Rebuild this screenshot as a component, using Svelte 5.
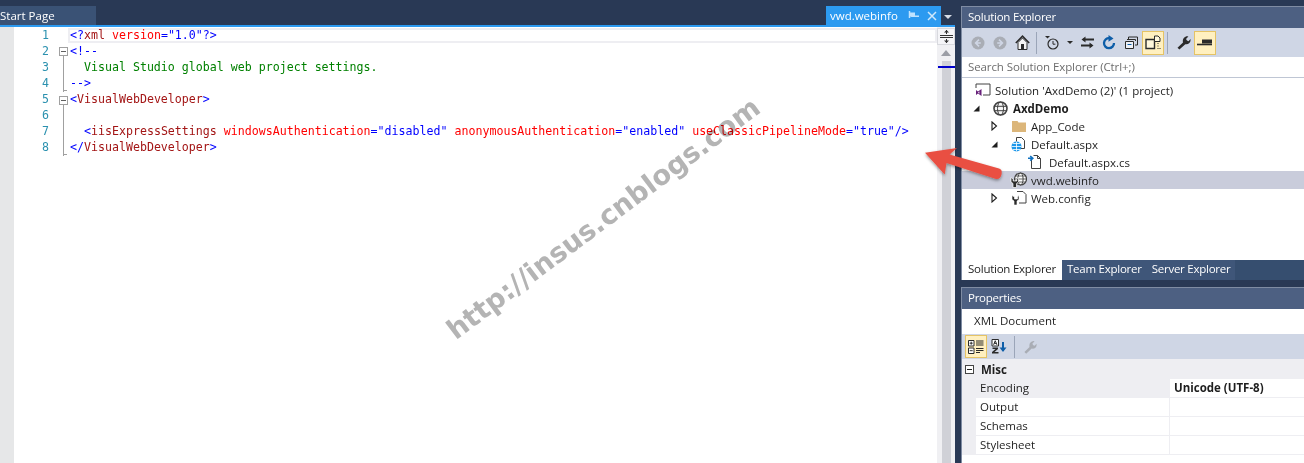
<script lang="ts">
	type Tok = { c: string; t: string };
	const D = 'd', E = 'e', A = 'a', G = 'g', K = 'k';
	const lines: Tok[][] = [
		[{ c: D, t: '<?' }, { c: E, t: 'xml' }, { c: K, t: ' ' }, { c: A, t: 'version' }, { c: D, t: '="1.0"?>' }],
		[{ c: D, t: '<!--' }],
		[{ c: G, t: '  Visual Studio global web project settings.' }],
		[{ c: D, t: '-->' }],
		[{ c: D, t: '<' }, { c: E, t: 'VisualWebDeveloper' }, { c: D, t: '>' }],
		[],
		[
			{ c: K, t: '  ' },
			{ c: D, t: '<' },
			{ c: E, t: 'iisExpressSettings' },
			{ c: K, t: ' ' },
			{ c: A, t: 'windowsAuthentication' },
			{ c: D, t: '="disabled"' },
			{ c: K, t: ' ' },
			{ c: A, t: 'anonymousAuthentication' },
			{ c: D, t: '="enabled"' },
			{ c: K, t: ' ' },
			{ c: A, t: 'useClassicPipelineMode' },
			{ c: D, t: '="true"/>' }
		],
		[{ c: D, t: '</' }, { c: E, t: 'VisualWebDeveloper' }, { c: D, t: '>' }]
	];

	const outline = ['', 'box', 'bar', 'end', 'box', 'bar', 'bar', 'end'];

	const tree = [
		{ label: "Solution 'AxdDemo (2)' (1 project)", depth: 0, exp: '', icon: 'sln' },
		{ label: 'AxdDemo', depth: 1, exp: 'open', icon: 'globe', bold: true },
		{ label: 'App_Code', depth: 2, exp: 'closed', icon: 'folder' },
		{ label: 'Default.aspx', depth: 2, exp: 'open', icon: 'aspx' },
		{ label: 'Default.aspx.cs', depth: 3, exp: 'none', icon: 'cs' },
		{ label: 'vwd.webinfo', depth: 2, exp: 'none', icon: 'vwd', selected: true },
		{ label: 'Web.config', depth: 2, exp: 'closed', icon: 'config' }
	];

	const props = [
		{ name: 'Encoding', value: 'Unicode (UTF-8)', active: true },
		{ name: 'Output', value: '' },
		{ name: 'Schemas', value: '' },
		{ name: 'Stylesheet', value: '' }
	];

	const indent = (d: number) => (d === 0 ? 12 : 18 * d - 10);
</script>

<div class="shell">
	<section class="doc">
		<div class="tabs">
			<div class="tab start">Start Page</div>
			<div class="tab-gap"></div>
			<div class="tab current">
				<span>vwd.webinfo</span>
				<svg width="11" height="9" viewBox="0 0 11 9" class="pin"><path d="M1.500 0v7" stroke="#bfe3ff" stroke-width="1.500" /><path d="M2 1.500h5v4H2zM7 4.500h4v1.500H2z" fill="#bfe3ff" /></svg>
				<svg width="10" height="10" viewBox="0 0 10 10" class="close"><path d="M1 1l8 8M9 1l-8 8" stroke="#cfe8fb" stroke-width="1.500" /></svg>
			</div>
			<div class="tab-menu"><i></i></div>
		</div>
		<div class="editor">
			<div class="gutter"></div>
			<div class="numbers">
				{#each lines as _, i}
					<div class="num">{i + 1}</div>
				{/each}
			</div>
			<div class="folds">
				{#each outline as o}
					<div class="fold {o}">
						{#if o === 'box'}<span class="minus"></span>{/if}
					</div>
				{/each}
			</div>
			<div class="code">
				{#each lines as line, i}
					<div class="line" class:hl={i === 0}>
						{#each line as tok}<span class={tok.c}>{tok.t}</span>{/each}
					</div>
				{/each}
			</div>
			<div class="vscroll">
				<div class="split">
					<svg width="15" height="15" viewBox="0 0 15 15"><path d="M1 6.500h13M1 8.500h13" stroke="#333" /><path d="M7.500 1v4M7.500 10v4" stroke="#333" /><path d="M5 3.500L7.500 1 10 3.500zM5 11.500L7.500 14 10 11.500z" fill="#333" /></svg>
				</div>
				<div class="up"></div>
				<div class="thumb"><i class="marker"></i></div>
			</div>
		</div>
	</section>

	<aside class="side">
		<section class="se">
			<header class="title">Solution Explorer</header>
			<div class="toolbar">
				<span class="tb"><svg width="14" height="14" viewBox="0 0 14 14"><circle cx="7" cy="7" r="6.500" fill="#a9adb5" /><path d="M8 3.600L4.600 7 8 10.400M4.800 7h5" fill="none" stroke="#cfd6e5" stroke-width="1.600" /></svg></span>
				<span class="tb"><svg width="14" height="14" viewBox="0 0 14 14"><circle cx="7" cy="7" r="6.500" fill="#a9adb5" /><path d="M6 3.600L9.400 7 6 10.400M9.200 7h-5" fill="none" stroke="#cfd6e5" stroke-width="1.600" /></svg></span>
				<span class="tb"><svg width="15" height="15" viewBox="0 0 15 15"><path d="M.8 8L7.500 1.200 14.200 8" fill="none" stroke="#2b2b2b" stroke-width="1.600" /><path d="M3 7.500v7h9v-7L7.500 3z" fill="#f4f4f4" stroke="#2b2b2b" /><path d="M6 9h3v5.500H6z" fill="#2b2b2b" /></svg></span>
				<i class="sep"></i>
				<span class="tb clock"><svg width="16" height="15" viewBox="0 0 16 15"><path d="M1 1h5L3.500 3.600z" fill="#2b2b2b" /><circle cx="9" cy="9" r="5" fill="none" stroke="#2b2b2b" stroke-width="1.200" /><path d="M9 6v3.200h2.400" fill="none" stroke="#2b2b2b" /></svg></span>
				<span class="drop"><svg width="6" height="3" viewBox="0 0 6 3"><path d="M0 0h6L3 3z" fill="#2b2b2b" /></svg></span>
				<span class="tb"><svg width="15" height="13" viewBox="0 0 15 13"><path d="M14 3.500H3M1 9.500h11" stroke="#2b2b2b" stroke-width="1.800" /><path d="M5.500 .5L1.500 3.500l4 3zM9.500 6.500l4 3-4 3z" fill="#2b2b2b" /></svg></span>
				<span class="tb"><svg width="14" height="15" viewBox="0 0 14 15"><path d="M7.500 3.200A5 5 0 1 0 12 8" fill="none" stroke="#0e5ea8" stroke-width="2.300" /><path d="M6.500 0l5 3.400-5 3.400z" fill="#0e5ea8" /></svg></span>
				<span class="tb"><svg width="13" height="13" viewBox="0 0 13 13"><path d="M3.500 3.500V1h9v8h-2.500" fill="none" stroke="#2b2b2b" /><path d="M2 3.500h8.500V5" fill="none" stroke="#2b2b2b" /><path d="M.5 5.500h8v7h-8z" fill="#eef1f7" stroke="#2b2b2b" /><path d="M2.500 8.500h4" stroke="#0e5ea8" /></svg></span>
				<span class="tb on"><svg width="17" height="15" viewBox="0 0 17 15"><path d="M1 4.500h8.500v9H1z" fill="#fff8dd" stroke="#2b2b2b" stroke-width="1.400" /><path d="M9.500 1h3.500l2 2v3.500H9.500z" fill="#fff8dd" stroke="#2b2b2b" /><path d="M13 8v1M13 10.500v1M13 13v1M15 13v1" stroke="#2b2b2b" /></svg></span>
				<i class="sep"></i>
				<span class="tb"><svg width="15" height="15" viewBox="0 0 15 15"><path d="M1.500 12.800L7 7.400C6.200 4.600 8 1.200 11.400 1.200l1 .2L10 4l1 1.600 1.500.6 2-2.200c.6 3.400-2 5.800-5.200 5.200L3.400 14.600z" fill="#2b2b2b" /></svg></span>
				<span class="tb on"><svg width="16" height="9" viewBox="0 0 16 9"><path d="M5 1.500h10v4H5z" fill="#2b2b2b" /><path d="M0 6.500h15" stroke="#2b2b2b" stroke-width="1.600" /></svg></span>
			</div>
			<div class="search">Search Solution Explorer (Ctrl+;)</div>
			<div class="tree">
				{#each tree as row}
					<div class="row" class:sel={row.selected} class:bold={row.bold} style="padding-left: {indent(row.depth)}px">
						{#if row.exp}
							<span class="exp">
								{#if row.exp === 'open'}<svg width="7" height="7" viewBox="0 0 7 7"><path d="M6.500 .5v6h-6z" fill="#1e1e1e" /></svg>{/if}
								{#if row.exp === 'closed'}<svg width="7" height="10" viewBox="0 0 7 10"><path d="M1 1l4.500 4L1 9z" fill="#fff" stroke="#1e1e1e" stroke-width="1.100" /></svg>{/if}
							</span>
						{/if}
						<span class="ico">
							{#if row.icon === 'sln'}
								<svg width="16" height="14" viewBox="0 0 16 14"><path d="M1 5V1h14v11H8" fill="none" stroke="#424242" /><path d="M1 7l2 1.500L6.500 6v7L3 10.500 1 12z" fill="#68217a" /><path d="M4.400 8.400v2.400L3 9.600z" fill="#fff" /></svg>
							{:else if row.icon === 'globe'}
								<svg width="15" height="15" viewBox="0 0 15 15"><circle cx="7.500" cy="7.500" r="6.500" fill="#f6f6f6" stroke="#424242" stroke-width="1.600" /><ellipse cx="7.500" cy="7.500" rx="3" ry="6.500" fill="none" stroke="#424242" /><path d="M1 5.300h13M1 9.700h13" stroke="#424242" /></svg>
							{:else if row.icon === 'folder'}
								<svg width="14" height="12" viewBox="0 0 14 12"><path d="M0 1h5.500l1 1.500H14V12H0z" fill="#dcb67a" /></svg>
							{:else if row.icon === 'aspx'}
								<svg width="15" height="15" viewBox="0 0 15 15"><path d="M5.500 .5h5l3 3v8h-8z" fill="#fff" stroke="#424242" /><circle cx="5.500" cy="9.500" r="5" fill="#1c97ea" /><path d="M.5 9.500h10M5.500 4.500v10M2 6.500h7M2 12.500h7" stroke="#fff" stroke-width=".8" /></svg>
							{:else if row.icon === 'cs'}
								<svg width="14" height="14" viewBox="0 0 14 14" class="nudge"><path d="M3.500 5v8.500h9V3.500l-3-3h-4" fill="#fff" stroke="#424242" /><path d="M9.500 .5v3h3" fill="none" stroke="#424242" /><path d="M0 3.300h3.500M2.200 1l2.600 2.300-2.600 2.300" fill="none" stroke="#0e70c0" stroke-width="1.600" /></svg>
							{:else if row.icon === 'vwd'}
								<svg width="17" height="16" viewBox="0 0 17 16"><circle cx="10.500" cy="7" r="6" fill="#fff" stroke="#424242" stroke-width="1.200" /><ellipse cx="10.500" cy="7" rx="2.600" ry="6" fill="none" stroke="#424242" /><path d="M4.500 7h12M5.500 4h10M5.500 10h10" stroke="#424242" stroke-width=".8" /><path d="M1 5.500v4.500l2 1.500v4h3.500v-4l2-1.500V5.500L6.800 7v2H3.200V7z" fill="#2b2b2b" stroke="#fff" stroke-width=".7" /></svg>
							{:else if row.icon === 'config'}
								<svg width="16" height="16" viewBox="0 0 16 16"><path d="M6 1.500h6l3 3V13H8" fill="#fff" stroke="#424242" /><path d="M1 5.500v4l2 1.500v4h3v-4l2-1.500v-4L6.500 7v2h-3V7z" fill="#2b2b2b" stroke="#fff" stroke-width=".6" /></svg>
							{/if}
						</span>
						<span class="label">{row.label}</span>
					</div>
				{/each}
			</div>
			<div class="se-tabs">
				<div class="se-tab active">Solution Explorer</div>
				<div class="se-tab">Team Explorer</div>
				<div class="se-tab">Server Explorer</div>
			</div>
		</section>

		<section class="props">
			<header class="title">Properties</header>
			<div class="kind">XML Document</div>
			<div class="toolbar ptool">
				<span class="tb on"><svg width="16" height="14" viewBox="0 0 16 14"><path d="M.5 .5h5.500v5.500H.5zM.5 8h5.500v5.500H.5z" fill="#fff" stroke="#2b2b2b" /><path d="M1.700 3.200h3M3.200 1.700v3M1.700 10.700h3" stroke="#2b2b2b" /><path d="M8 1h7.500M8 3h7.500M8 5h7.500M8 8.500h7.500M8 10.500h7.500M8 12.500h4" stroke="#2b2b2b" stroke-width="1.100" /></svg></span>
				<span class="tb"><svg width="16" height="15" viewBox="0 0 16 15"><path d="M1 .5h6.500v6.500H1z" fill="#fff" stroke="#2b2b2b" /><path d="M2.600 5.800L4.250 1.700 5.900 5.800M3.200 4.400h2.100" fill="none" stroke="#2b2b2b" /><path d="M1.500 8.500h5.500v1.500L3.500 13h4v1.500H1V13l3.500-3h-3z" fill="#2b2b2b" /><path d="M12 3v9" stroke="#0e5ea8" stroke-width="2" /><path d="M8.500 8.500h7L12 13z" fill="#0e5ea8" /></svg></span>
				<i class="sep"></i>
				<span class="tb"><svg width="14" height="14" viewBox="0 0 15 15"><path d="M1.500 12.800L7 7.400C6.200 4.600 8 1.200 11.400 1.200l1 .2L10 4l1 1.600 1.500.6 2-2.200c.6 3.400-2 5.800-5.200 5.200L3.400 14.600z" fill="#a9adb5" /></svg></span>
			</div>
			<div class="cat">
				<span class="catbox"></span>
				<b>Misc</b>
			</div>
			{#each props as p}
				<div class="prop">
					<div class="pname" class:active={p.active}>{p.name}</div>
					<div class="pvalue">{p.value}</div>
				</div>
			{/each}
		</section>
	</aside>

	<div class="watermark">http://insus.cnblogs.com</div>
	<svg class="arrow" width="90" height="50" viewBox="0 0 90 50">
		<defs>
			<filter id="arrow-shadow" x="-20%" y="-20%" width="140%" height="140%"><feDropShadow dx="0" dy="1.500" stdDeviation="1.500" flood-color="#000" flood-opacity=".4" /></filter>
		</defs>
		<path d="M5 12.700L37 8l-7.500 6.500L79 28.500c3 1 3 3 2.500 6-.5 3-2.500 5-5.500 4.500L26.500 23l-1.800 11.500z" fill="#e94f43" filter="url(#arrow-shadow)" />
	</svg>
</div>

<style>
	:global(body) {
		margin: 0;
		background: #293955;
	}

	.shell {
		position: relative;
		display: flex;
		height: 463px;
		width: 1304px;
		overflow: hidden;
		background: #293955;
		font-family: 'Open Sans', 'Noto Sans', sans-serif;
		font-size: 11.5px;
		color: #1e1e1e;
	}

	.doc {
		width: 955px;
		display: flex;
		flex-direction: column;
		flex: none;
	}

	.tabs {
		height: 25px;
		padding-top: 6px;
		box-sizing: border-box;
		display: flex;
	}

	.tab {
		color: #fff;
		line-height: 19px;
		white-space: nowrap;
	}

	.start {
		width: 96px;
		background: #3a5275;
	}

	.tab-gap {
		width: 730px;
	}

	.current {
		width: 115px;
		background: #2c9af0;
		padding-left: 4px;
		box-sizing: border-box;
		display: flex;
		align-items: center;
	}

	.pin {
		margin-left: 10px;
	}

	.close {
		margin-left: 8px;
	}

	.tab-menu {
		width: 14px;
		display: flex;
		justify-content: center;
		padding-top: 9px;
		box-sizing: border-box;
	}

	.tab-menu i {
		width: 0;
		height: 0;
		border: 4px solid transparent;
		border-top-color: #d8dde6;
		border-bottom: 0;
	}

	.editor {
		flex: 1;
		display: flex;
		background: #fff;
		border-top: 2px solid #2c9af0;
		font-family: 'DejaVu Sans Mono', monospace;
		font-size: 11.62px;
		line-height: 16.14px;
		min-height: 0;
	}

	.gutter {
		width: 14px;
		background: #e6e7e8;
		flex: none;
	}

	.numbers {
		width: 35px;
		flex: none;
		color: #2b91af;
		text-align: right;
		margin-top: -0.5px;
	}

	.num {
		height: 16.14px;
	}

	.folds {
		width: 19px;
		flex: none;
		padding-left: 10px;
		box-sizing: border-box;
	}

	.fold {
		height: 16.14px;
	}

	.minus {
		display: block;
		width: 9px;
		height: 9px;
		box-sizing: border-box;
		border: 1px solid #a0a0a0;
		background: linear-gradient(#606060, #606060) center / 5px 1px no-repeat #fff;
		position: relative;
		top: 4px;
	}

	.fold.bar::before,
	.fold.end::before {
		content: '';
		display: block;
		width: 1px;
		background: #a0a0a0;
		margin-left: 4px;
		height: 100%;
	}

	.fold.end::after {
		content: '';
		display: block;
		width: 4px;
		height: 1px;
		background: #a0a0a0;
		margin-left: 4px;
		margin-top: -2px;
	}

	.fold.box::after {
		content: '';
		display: block;
		width: 1px;
		height: 3px;
		background: #a0a0a0;
		margin-left: 4px;
		margin-top: 4px;
	}

	.code {
		flex: 1;
		min-width: 0;
		white-space: pre;
		margin-top: -0.5px;
	}

	.line {
		height: 16.14px;
		padding-left: 2px;
		box-sizing: border-box;
	}

	.line.hl {
		box-shadow: inset 0 0 0 2px #eeeef2;
		margin-top: 1px;
		height: 15.14px;
		line-height: 14.5px;
	}

	.d {
		color: #0000ff;
	}

	.e {
		color: #a31515;
	}

	.a {
		color: #ff0000;
	}

	.g {
		color: #008000;
	}

	.vscroll {
		width: 18px;
		flex: none;
		background: #f0f0f3;
		display: flex;
		flex-direction: column;
		align-items: center;
	}

	.split {
		width: 18px;
		height: 17px;
		margin-top: 1px;
		display: flex;
		align-items: center;
		justify-content: center;
		background: #f5f5f8;
		border: 1px solid #d8d9de;
		box-sizing: border-box;
	}

	.up {
		width: 0;
		height: 0;
		border: 5px solid transparent;
		border-bottom: 6px solid #9c9ea6;
		border-top: 0;
		margin-top: 5px;
	}

	.thumb {
		margin-top: 5px;
		flex: 1;
		width: 9px;
		background: #d0d1d7;
		position: relative;
	}

	.marker {
		position: absolute;
		left: -4px;
		width: 17px;
		height: 2px;
		top: 5px;
		background: #0000cc;
	}

	.side {
		width: 343px;
		margin-left: 6px;
		flex: none;
		padding-top: 6px;
		display: flex;
		flex-direction: column;
	}

	.se {
		height: 274px;
		display: flex;
		flex-direction: column;
		border-left: 1px solid #7f8ca3;
		box-sizing: border-box;
	}

	.title {
		height: 22px;
		line-height: 20px;
		padding-left: 6px;
		background: #4d6082;
		border-top: 1px solid #7f8ca3;
		box-sizing: border-box;
		color: #fff;
		flex: none;
		letter-spacing: -0.25px;
	}

	.toolbar {
		height: 29px;
		flex: none;
		background: #cfd6e5;
		display: flex;
		align-items: center;
		padding-left: 5px;
	}

	.tb {
		width: 22px;
		height: 24px;
		box-sizing: border-box;
		display: flex;
		align-items: center;
		justify-content: center;
		flex: none;
	}

	.tb.on {
		background: #fff0c0;
		border: 1px solid #e5c365;
	}

	.sep {
		width: 1px;
		height: 22px;
		margin: 0 4px 0 3px;
		background: #9ba5b8;
		flex: none;
	}

	.drop {
		width: 13px;
		flex: none;
		display: flex;
		align-items: center;
		padding-left: 4px;
		box-sizing: border-box;
	}

	.search {
		height: 21px;
		line-height: 20px;
		flex: none;
		background: #fff;
		color: #6d6d6d;
		padding-left: 6px;
		border-bottom: 1px solid #bfc6d4;
		box-sizing: border-box;
		letter-spacing: -0.1px;
	}

	.tree {
		flex: 1;
		background: #fff;
		padding-top: 3px;
	}

	.row {
		height: 18px;
		display: flex;
		align-items: center;
		box-sizing: border-box;
		white-space: nowrap;
	}

	.row.sel {
		background: #c9ccdb;
	}

	.row.bold .label {
		font-weight: 700;
	}

	.exp {
		width: 22px;
		padding-left: 3px;
		box-sizing: border-box;
		display: flex;
		align-items: center;
		flex: none;
	}

	.ico {
		width: 17px;
		margin-right: 4px;
		height: 16px;
		display: flex;
		align-items: center;
		justify-content: center;
		flex: none;
	}

	.nudge {
		margin-left: -3px;
	}

	.se-tabs {
		height: 20px;
		flex: none;
		display: flex;
		background: #364e6f;
		letter-spacing: -0.25px;
	}

	.se-tab {
		background: #3f5679;
		color: #fff;
		line-height: 18px;
		padding: 0 5px;
		white-space: nowrap;
	}

	.se-tab.active {
		width: 100px;
		padding: 0 0 0 6px;
		box-sizing: border-box;
		background: #fff;
		color: #1e1e1e;
	}

	.props {
		margin-top: 7px;
		flex: 1;
		background: #fff;
		border-left: 1px solid #7f8ca3;
	}

	.kind {
		height: 25px;
		line-height: 23px;
		padding-left: 12px;
		background: #fff;
	}

	.ptool {
		height: 25px;
		padding-left: 3px;
	}

	.ptool .tb {
		height: 23px;
		margin-right: 1px;
	}

	.cat {
		height: 20px;
		background: #eeeef2;
		display: flex;
		align-items: center;
		padding-left: 3px;
		box-sizing: border-box;
	}

	.catbox {
		width: 9px;
		height: 9px;
		box-sizing: border-box;
		border: 1px solid #444;
		background: linear-gradient(#222, #222) center / 5px 1px no-repeat #fff;
		margin-right: 7px;
	}

	.prop {
		display: flex;
		height: 19px;
		background: #eeeef2;
		padding-left: 14px;
	}

	.pname {
		width: 193px;
		line-height: 18px;
		padding-left: 4px;
		box-sizing: border-box;
		background: #fff;
		border-bottom: 1px solid #eeeef2;
		flex: none;
	}

	.pname.active {
		background: #eeeef2;
	}

	.pvalue {
		flex: 1;
		background: #fff;
		font-weight: 700;
		line-height: 18px;
		padding-left: 4px;
		margin-left: 1px;
		border-bottom: 1px solid #eeeef2;
	}

	.watermark {
		position: absolute;
		left: 603px;
		top: 218px;
		transform: translate(-50%, -50%) rotate(-36.8deg);
		font-family: 'DejaVu Sans', sans-serif;
		font-weight: 700;
		font-size: 27.5px;
		color: #b4b4b4;
		white-space: nowrap;
		mix-blend-mode: multiply;
	}

	.arrow {
		position: absolute;
		left: 920px;
		top: 140px;
	}
</style>
